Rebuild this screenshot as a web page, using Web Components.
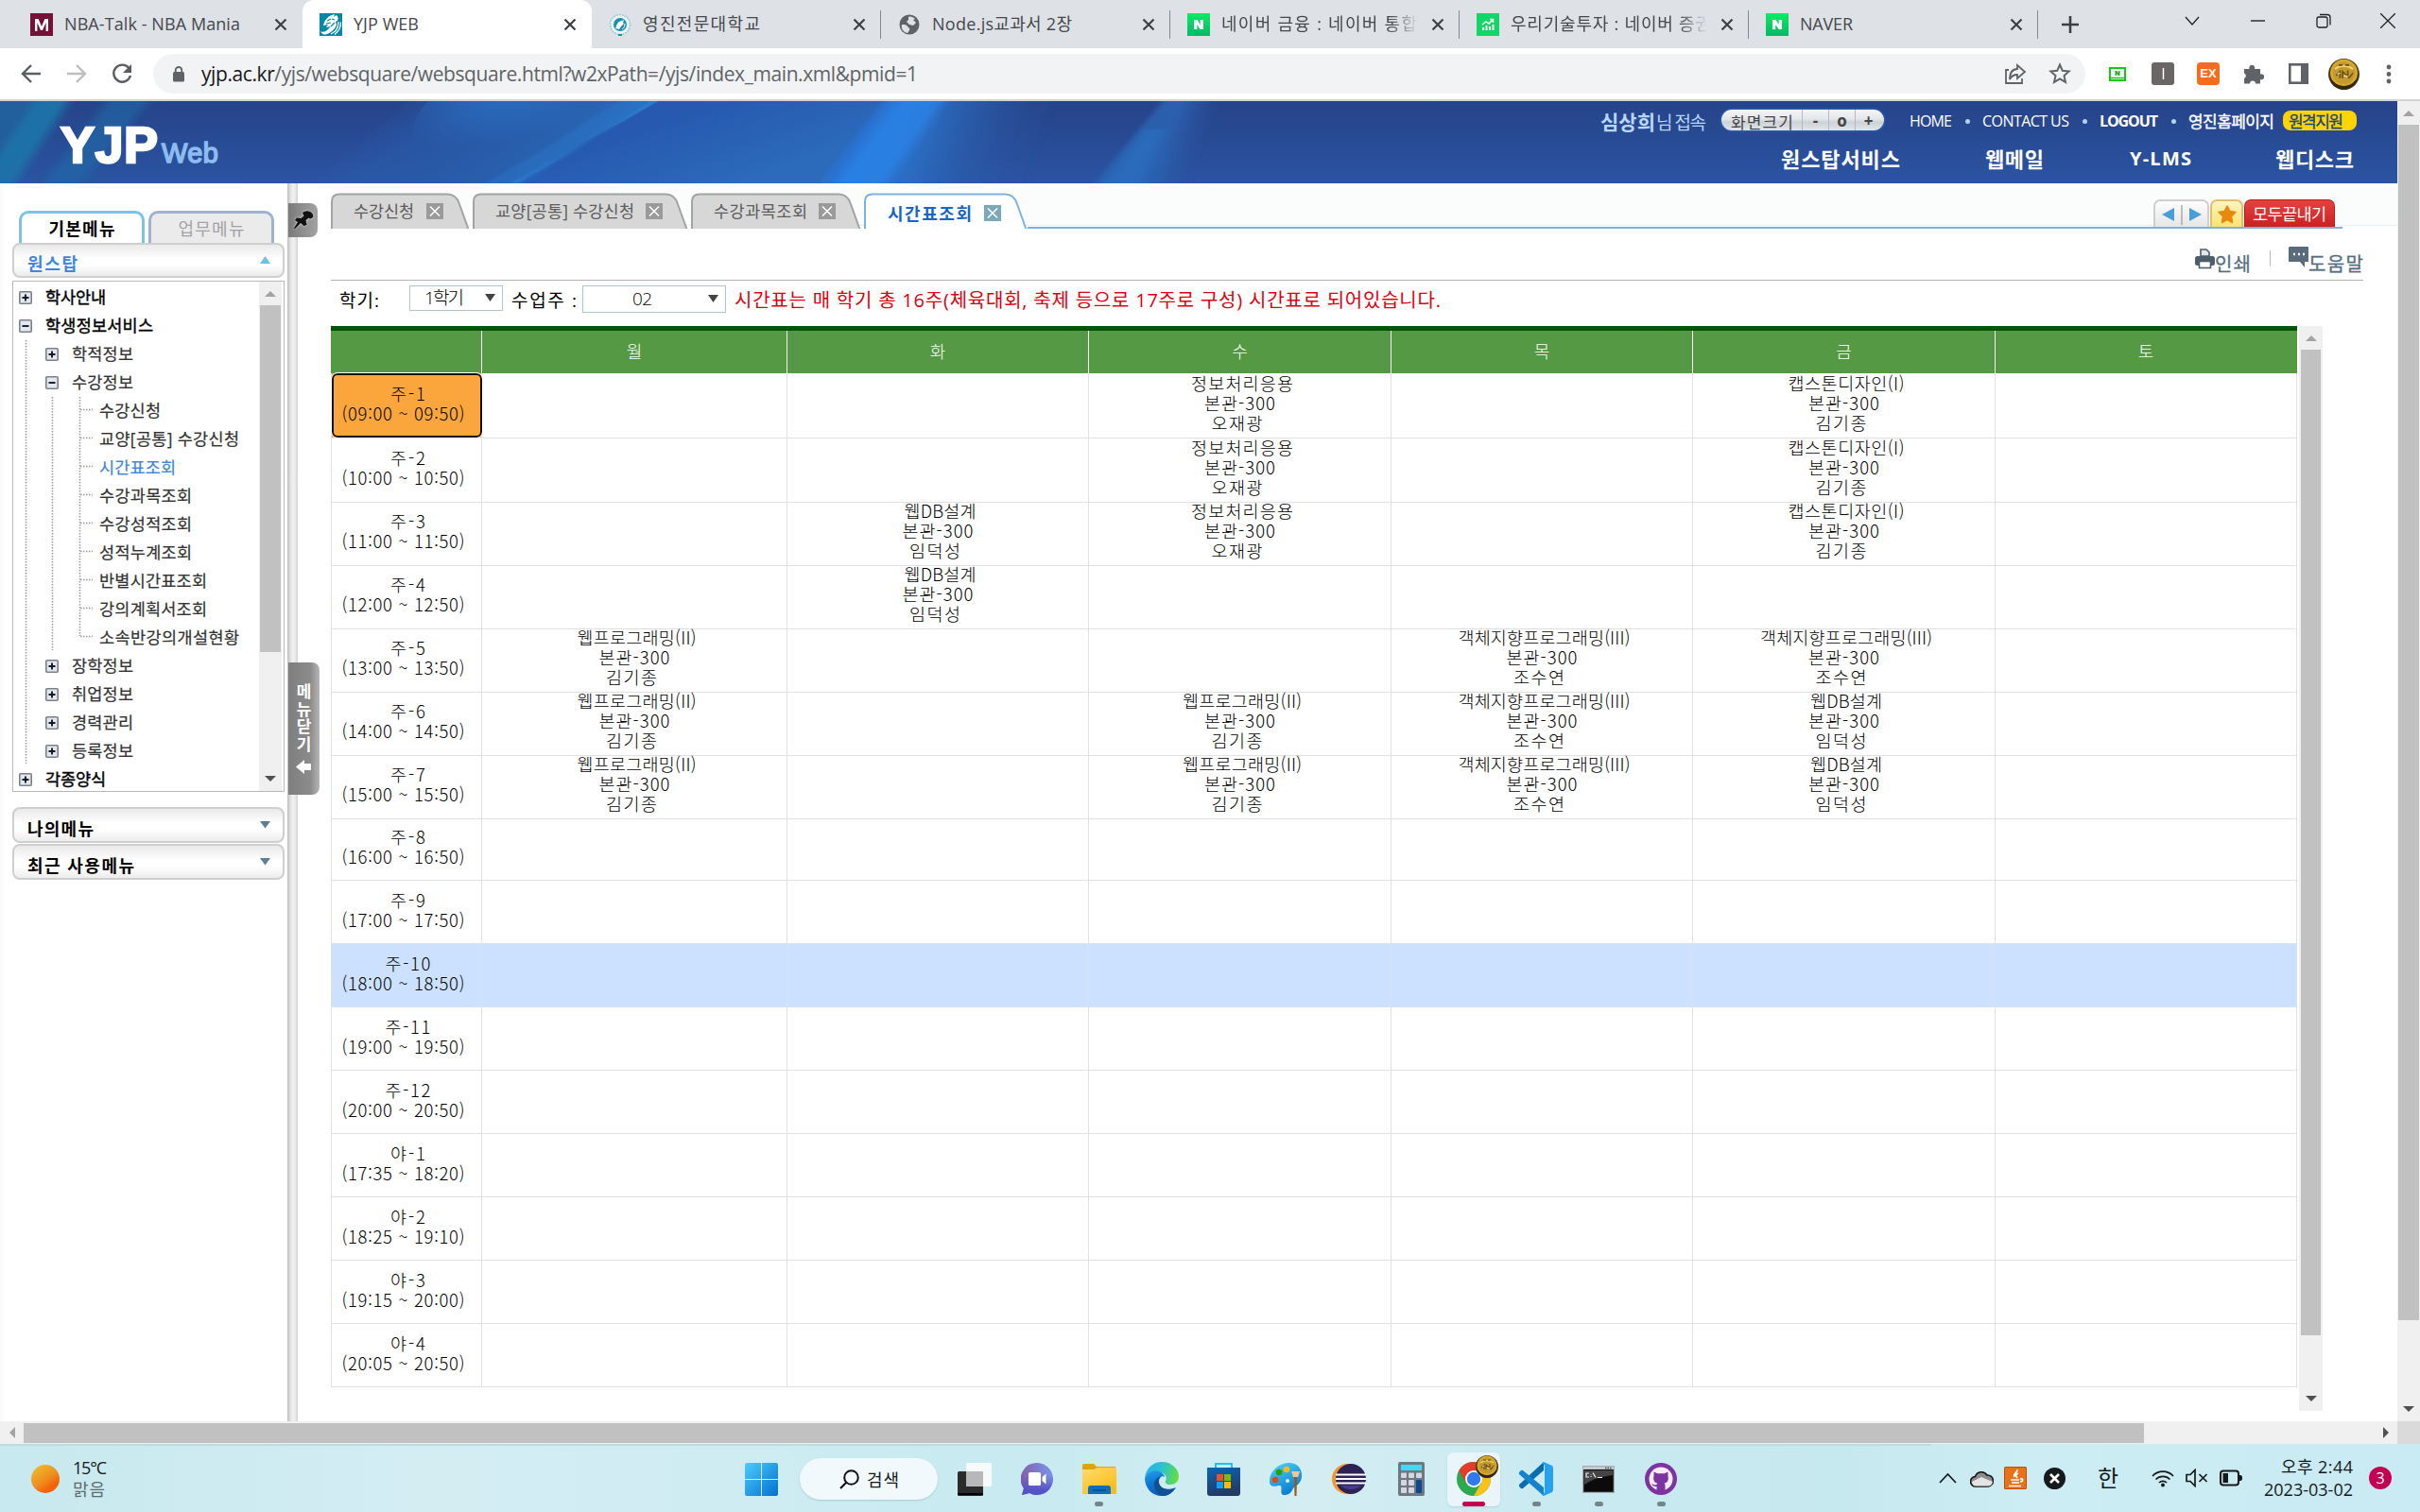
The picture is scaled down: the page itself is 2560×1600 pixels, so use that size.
<!DOCTYPE html>
<html lang="ko">
<head>
<meta charset="utf-8">
<title>YJP WEB</title>
<style>
body{margin:0;width:2560px;height:1600px;overflow:hidden;background:#fff;font-family:"Open Sans","Noto Sans CJK KR",sans-serif;font-size:18px;color:#000}
</style>
</head>
<body>
<app-desktop></app-desktop>
<script>
const BASE = `*{box-sizing:border-box}:host{display:block}.r{display:flex;align-items:center}svg{display:block;flex:none}fit-text{flex:none}`;
function define(name, render) {
  customElements.define(name, class extends HTMLElement {
    connectedCallback() {
      if (this.shadowRoot) return;
      const root = this.attachShadow({ mode: 'open' });
      root.innerHTML = render(this);
    }
  });
}
const A = (el, n, d) => el.hasAttribute(n) ? el.getAttribute(n) : d;

/* Text run tracked to an exact width */
customElements.define('fit-text', class extends HTMLElement {
  connectedCallback() {
    if (this.shadowRoot) return;
    const root = this.attachShadow({ mode: 'open' });
    root.innerHTML = '<style>:host{display:inline-block;white-space:pre}</style><slot></slot>';
    const w = parseFloat(this.getAttribute('w'));
    if (!w) return;
    const n = [...this.textContent].length;
    const nat = this.getBoundingClientRect().width;
    if (n > 1) this.style.letterSpacing = ((w - nat) / (n - 1)) + 'px';
    this.style.width = w + 'px';
  }
});

/* Scroll bar, vertical or horizontal */
define('scroll-bar', el => {
  const h = A(el, 'dir', 'v') === 'h', size = A(el, 'size', '24'), inset = A(el, 'inset', '1');
  const tri = (p, c) => `<svg width="12" height="12" viewBox="0 0 12 12"><path d="${p}" fill="${c}"/></svg>`;
  return `<style>${BASE}
  :host{display:flex;flex:none;flex-direction:${h ? 'row' : 'column'};background:#f0f0f0;${h ? 'height' : 'width'}:${size}px}
  .a{flex:none;width:${h ? '25px' : '100%'};height:${h ? '100%' : '25px'};display:flex;align-items:center;justify-content:center}
  .t{flex:none;background:#c1c1c1;${h ? `width:${A(el, 'len')}px;margin:2px 0 1px` : `height:${A(el, 'len')}px;margin:0 ${inset}px`}}
  .s{flex:1}</style>
  <div class="a">${tri(h ? 'M9 0v12L3 6z' : 'M0 9h12L6 3z', '#a3a3a3')}</div><div class="t"></div><div class="s"></div>
  <div class="a">${tri(h ? 'M3 0v12l6-6z' : 'M0 2h12L6 8z', '#505050')}</div>`;
});

/* ---------- Browser ---------- */
const FAV = {
  m: `<rect width="24" height="24" fill="#741134"/><path d="M5 19V6h3.600L12 14l3.400-8H19v13h-2.400V10L13 18h-2L7.400 10v9z" fill="#fff"/>`,
  yjp: `<rect width="24" height="24" fill="#0387a6"/><path d="M1 19c3 2 6 0 8-2l3-3-5 1 2-3-5 1C5 8 8 4 13 2l3-1-1 3 3-2c2 2 2 4 1 6l-2 1 1 3c-1 4-5 8-10 10-3 1-6 0-7-3z" fill="#fff"/><path d="M12 22c5-2 8-7 8-13M16 22.500c4-3 6.500-7 6.500-13" stroke="#fff" stroke-width="1.300" fill="none"/><path d="M8 8l4-2M7 11l5-1M13 6l3 1M12 14l4-4" stroke="#0387a6" stroke-width="1.200"/>`,
  yju: `<ellipse cx="12" cy="12" rx="10.500" ry="10.500" fill="#e8f4f8" stroke="#9cc7d6" stroke-width="1.500" stroke-dasharray="2 1"/><circle cx="12" cy="12" r="7" fill="#1b8fae"/><path d="M7 16c1-1 1-5 4-7l5-2-1 3 1 1-3 3-2 3z" fill="#fff"/><path d="M14 17c2-1 3-3 3-6" stroke="#fff" fill="none"/><path d="M10 22h4v2h-4z" fill="#1b8fae"/>`,
  globe: `<circle cx="12" cy="12" r="10.500" fill="#5f6368"/><path d="M4 12c3 0 5 0 6 2s3 1 2 4l-2 3c-4-1-7-4-6-9zM11 4c2-1 5 0 7 2l-2 1 3 3-3 3-4-1-3-3 2-2z" fill="#dee1e6"/>`,
  n: `<defs><linearGradient id="ng" x2="0" y2="1"><stop stop-color="#03ee66"/><stop offset="1" stop-color="#07b766"/></linearGradient></defs><rect width="24" height="24" fill="url(#ng)"/><path d="M7 17V7h3.400l3.300 4.900V7H17v10h-3.400l-3.300-4.900V17z" fill="#fff"/>`,
  chart: `<rect width="24" height="24" fill="#12d667"/><path d="M6 18v-3h2v3zm3.500 0v-5h2v5zm3.500 0v-4h2v4zm3.500 0V12h2v6z" fill="#fff"/><path d="M6 12l4-3 3 2 4-4M14 6.500h3.500V10" stroke="#fff" stroke-width="1.500" fill="none"/>`
};
define('browser-tab', el => `<style>${BASE}
  :host{width:306px;flex:none;height:51px}
  .tab{height:51px;padding-left:18px}
  :host([active]) .tab{background:#fff;border-radius:12px 12px 0 0}
  .t{flex:none;width:200px;margin-left:12px;height:26px;line-height:26px;color:#45484c;white-space:nowrap;margin-top:-1px}
  :host([fade]) .t{width:214px;-webkit-mask-image:linear-gradient(90deg,#000 178px,transparent 208px)}
  .x{margin-left:22px}:host([fade]) .x{margin-left:8px}
  .d{flex:none;width:1px;height:30px;background:#85898e;margin-left:15px}
  </style><div class="tab r"><svg width="24" height="24" viewBox="0 0 24 24">${FAV[A(el, 'icon')]}</svg>
  <div class="t"><fit-text w="${A(el, 'w')}">${A(el, 'label')}</fit-text></div>
  <svg class="x" width="14" height="14" viewBox="0 0 14 14"><path d="M1.500 1.500l11 11M12.500 1.500l-11 11" stroke="#3c4043" stroke-width="2.200"/></svg>
  ${el.hasAttribute('divider') ? '<div class="d"></div>' : ''}</div>`);

define('browser-tabs', () => `<style>${BASE}
  :host{height:51px;background:#dee1e6}.r{height:51px;padding-left:14px}
  .c{height:45px;display:flex;align-items:center;align-self:flex-start}
  </style><div class="r">
  <browser-tab icon="m" w="186" label="NBA-Talk - NBA Mania"></browser-tab>
  <browser-tab active icon="yjp" w="69" label="YJP WEB"></browser-tab>
  <browser-tab divider icon="yju" w="124" label="영진전문대학교"></browser-tab>
  <browser-tab divider icon="globe" w="148" label="Node.js교과서 2장"></browser-tab>
  <browser-tab divider fade icon="n" w="207" label="네이버 금융 : 네이버 통합"></browser-tab>
  <browser-tab divider fade icon="chart" w="212" label="우리기술투자 : 네이버 증권"></browser-tab>
  <browser-tab divider icon="n" w="56" label="NAVER"></browser-tab>
  <svg style="margin-left:25px" width="18" height="18" viewBox="0 0 18 18"><path d="M9 0v18M0 9h18" stroke="#3c4043" stroke-width="2.600"/></svg>
  <div class="c"><svg style="margin-left:112px" width="16" height="16" viewBox="0 0 16 16"><path d="M1 3l7 8 7-8" fill="none" stroke="#222" stroke-width="1.300"/></svg>
  <svg style="margin-left:54px" width="16" height="16" viewBox="0 0 16 16"><path d="M0 7h15" stroke="#222" stroke-width="1.400"/></svg>
  <svg style="margin-left:52px" width="18" height="18" viewBox="0 0 18 18"><rect x="2" y="4" width="11" height="11" rx="2" fill="none" stroke="#222" stroke-width="1.300"/><path d="M5 1.500h8q3 0 3 3v8" fill="none" stroke="#222" stroke-width="1.300"/></svg>
  <svg style="margin-left:51px;margin-top:-2px" width="16" height="16" viewBox="0 0 16 16"><path d="M0 0l16 16M16 0L0 16" stroke="#222" stroke-width="1.300"/></svg></div></div>`);

const COIN = `<circle cx="12" cy="12" r="12" fill="#4a3a18"/><circle cx="12" cy="11" r="10.500" fill="#d6a92e"/><circle cx="12" cy="11" r="8.500" fill="#c39a2b"/><path d="M5 8c4-3 10-3 14 0" stroke="#f0d878" stroke-width="1.200" fill="none"/><path d="M6 13l3-3v5M11 15v-5l4 4v-5M16 15l3-4M8 5h3M13 5h3" stroke="#6b5118" stroke-width="1.200" fill="none"/><path d="M7 12l2-1M12 13l3 1" stroke="#f3e6ae" fill="none"/><path d="M1 14c2 7 7 10 11 10s9-3 11-10c-3 5-7 7-11 7S4 19 1 14z" fill="#33270f"/>`;
define('browser-toolbar', () => `<style>${BASE}
  :host{height:56px;background:#fff;border-bottom:2px solid #d3d3d4}
  .bar{height:54px}.omni{width:2044px;height:42px;border-radius:21px;background:#f1f3f4;margin-left:22px;padding-left:21px}
  .url{font-size:21px;color:#5f6368;margin-left:18px;line-height:28px}b{font-weight:400;color:#17181a}
  </style><div class="bar r">
  <svg style="margin-left:22px" width="22" height="22" viewBox="0 0 22 22"><path d="M21 11H3M11 2l-9 9 9 9" fill="none" stroke="#5a5d61" stroke-width="2.400"/></svg>
  <svg style="margin-left:26px" width="22" height="22" viewBox="0 0 22 22"><path d="M1 11h18M11 2l9 9-9 9" fill="none" stroke="#bcbec0" stroke-width="2.400"/></svg>
  <svg style="margin-left:26px" width="22" height="22" viewBox="0 0 22 22"><path d="M18.500 5.200A9 9 0 1 0 20 13" fill="none" stroke="#5a5d61" stroke-width="2.400"/><path d="M21 1v9h-9z" fill="#5a5d61"/></svg>
  <div class="omni r"><svg width="12" height="17" viewBox="0 0 12 17"><rect y="6" width="12" height="10.500" rx="1.500" fill="#5f6368"/><path d="M2.700 7V4.300a3.300 3.300 0 0 1 6.600 0V7" fill="none" stroke="#5f6368" stroke-width="1.800"/></svg>
  <fit-text class="url" w="758"><b>yjp.ac.kr</b>/yjs/websquare/websquare.html?w2xPath=/yjs/index_main.xml&amp;pmid=1</fit-text>
  <svg style="margin-left:1149px" width="24" height="24" viewBox="0 0 24 24"><path d="M5 8H2v14h17v-5" fill="none" stroke="#5f6368" stroke-width="1.800"/><path d="M14 3l8 7-8 7v-4c-4 0-6 1-8 5 0-7 3-11 8-11z" fill="none" stroke="#5f6368" stroke-width="1.800"/></svg>
  <svg style="margin-left:23px" width="24" height="24" viewBox="0 0 24 24"><path d="M12 2.500l2.800 6.300 6.900.7-5.200 4.600 1.500 6.800-6-3.500-6 3.500 1.500-6.800L2.300 9.500l6.900-.7z" fill="none" stroke="#5f6368" stroke-width="2"/></svg></div>
  <svg style="margin-left:25px" width="18" height="15" viewBox="0 0 18 15"><rect x="1" y="1" width="16" height="13" fill="#fff" stroke="#12c912" stroke-width="2"/><path d="M1 11.500h16" stroke="#12c912" stroke-width="1.500"/><path d="M6.500 9V4h1.800l1.600 2.500V4h1.600v5H9.700L8.100 6.500V9z" fill="#12b312"/></svg>
  <svg style="margin-left:27px" width="24" height="24" viewBox="0 0 24 24"><rect width="24" height="24" rx="3" fill="#6a6666"/><path d="M12.500 6v12" stroke="#fff" stroke-width="1.500"/></svg>
  <div style="margin-left:24px;width:24px;height:24px;border-radius:4px;background:#f56c1e;color:#fff;font:bold 13px/24px 'Liberation Sans';text-align:center">EX</div>
  <svg style="margin-left:25px" width="22" height="22" viewBox="0 0 22 22"><path d="M1 6h5.500a3 3 0 1 1 5.500 0H18v5.500a3 3 0 1 1 0 5.500v4.500h-5a3 3 0 0 0-6 0H1v-5.500a3 3 0 0 0 0-5.500z" fill="#5f6368"/></svg>
  <svg style="margin-left:26px" width="21" height="22" viewBox="0 0 21 22"><rect x="1.300" y="1.300" width="18.400" height="19.400" fill="#fff" stroke="#5f6368" stroke-width="2.600"/><path d="M13 1h7v20h-7z" fill="#5f6368"/></svg>
  <svg style="margin-left:21px" width="33" height="33" viewBox="0 0 24 24">${COIN}</svg>
  <svg style="margin-left:28px" width="6" height="21" viewBox="0 0 6 21"><g fill="#5f6368"><circle cx="3" cy="3" r="2.400"/><circle cx="3" cy="10.500" r="2.400"/><circle cx="3" cy="18" r="2.400"/></g></svg></div>`);

/* ---------- Site header ---------- */
define('site-header', () => `<style>${BASE}
  :host{display:grid;height:87px;overflow:hidden}
  .bg,.fg{grid-area:1/1}.fg{display:flex;justify-content:space-between;color:#fff}
  .logo{display:flex;align-items:baseline;font-family:"Liberation Sans";padding-left:64px;line-height:62px;height:87px;padding-top:15px}
  .logo .a{font-size:54px;font-weight:700;-webkit-text-stroke:2.500px #fff}.logo .b{font-size:29px;color:#8cbcf0;margin-left:4px;-webkit-text-stroke:1.500px #8cbcf0}
  .right{width:843px}.top{height:43px;line-height:22px;font-size:16px}.top>*{flex:none}
  .dot{width:5px;height:5px;border-radius:3px;background:#b4d3f2}
  .pill{width:172px;height:22px;border-radius:11px;margin-left:16px;background:linear-gradient(#f3f5f7,#e4e7ea 45%,#cdd2d8 60%,#e2e5e8);color:#444;display:flex;box-shadow:0 0 2px 1px #2c66b5;font-size:17px}
  .pill div{border-left:1px solid #b5b9bf;width:28px;text-align:center;font-weight:700;line-height:24px;height:22px}
  .y{width:78px;height:21px;border-radius:8px;background:#ffd400;color:#14438c;padding-left:6px;margin-left:9px;line-height:23px}
  .nav{font-weight:700;font-size:22px;height:36px;line-height:34px}
  </style>
  <svg class="bg" width="2536" height="87" viewBox="0 0 2536 87" preserveAspectRatio="none">
  <defs><linearGradient id="b" x2="0" y2="1"><stop stop-color="#264389"/><stop offset="1" stop-color="#2b54a2"/></linearGradient>
  <linearGradient id="m" gradientUnits="userSpaceOnUse" x1="420" y1="0" x2="540" y2="132"><stop stop-color="#2a60b0" stop-opacity="0"/><stop offset=".35" stop-color="#2859a8" stop-opacity=".8"/><stop offset=".8" stop-color="#2862b0"/><stop offset="1" stop-color="#2a70c0"/></linearGradient>
  <linearGradient id="n" gradientUnits="userSpaceOnUse" x1="750" y1="0" x2="780" y2="87"><stop stop-color="#2659af"/><stop offset="1" stop-color="#2c6abb"/></linearGradient>
  <linearGradient id="o" gradientUnits="userSpaceOnUse" x1="930" y1="0" x2="1100" y2="59"><stop stop-color="#2a72d0"/><stop offset=".3" stop-color="#2b6dc2"/><stop offset="1" stop-color="#29509b" stop-opacity="0"/></linearGradient>
  <linearGradient id="p" gradientUnits="userSpaceOnUse" x1="1232" y1="0" x2="1286" y2="18"><stop stop-color="#2a5fac"/><stop offset=".3" stop-color="#2a60ae"/><stop offset="1" stop-color="#29509b" stop-opacity="0"/></linearGradient>
  <radialGradient id="k" cx=".5" cy=".2" r=".6"><stop stop-color="#2a7bd0" stop-opacity=".75"/><stop offset="1" stop-color="#2a7bd0" stop-opacity="0"/></radialGradient>
  <filter id="f" x="-20%" y="-20%" width="140%" height="140%"><feGaussianBlur stdDeviation="6 1"/></filter><filter id="g" x="-10%" width="120%"><feGaussianBlur stdDeviation="1.200"/></filter><filter id="h" x="-20%" width="140%"><feGaussianBlur stdDeviation="3 0"/></filter></defs>
  <rect width="2536" height="87" fill="url(#b)"/>
  <g filter="url(#f)"><path d="M40-5h36L12 92h-40z" fill="#1f72a8"/><path d="M-10-5h50L-10 60z" fill="#235e9d"/><path d="M118-5h44L82 92H42z" fill="#226ba8" opacity=".6"/></g>
  <path d="M430 0h267L540 87H330z" fill="url(#m)"/>
  <ellipse cx="545" cy="10" rx="110" ry="52" fill="url(#k)" transform="rotate(-14 545 10)"/>
  <path d="M697 0h260L880 87H540z" fill="url(#n)"/>
  <path d="M660-3h36L552 88h-40l60-35z" fill="#2b76c6" opacity=".45" filter="url(#h)"/>
  <path d="M691-2h8L545 88h-8l94-50z" fill="#2f85d4" opacity=".6" filter="url(#g)"/>
  <path d="M935 0h185l-30 87H867z" fill="url(#o)" filter="url(#h)"/><path d="M950-4h50L935 92h-55z" fill="#2c84ea" opacity=".75" filter="url(#f)"/>
  <path d="M1232-2h60l-30 91H1156z" fill="url(#p)" filter="url(#h)"/><path d="M1212 30l20 0-24 60h-44z" fill="#2c74c8" opacity=".55" filter="url(#f)"/></svg>
  <div class="fg"><div class="logo"><fit-text class="a" w="103">YJP</fit-text><fit-text class="b" w="60">Web</fit-text></div>
  <div class="right"><div class="top r">
  <fit-text w="58" style="font-size:21px;font-weight:700;color:#b6d7fb">심상희</fit-text><fit-text w="53" style="font-size:19px;color:#b6d7fb;margin-left:1px;margin-top:2px">님 접속</fit-text>
  <div class="pill" style="margin-top:-4px"><fit-text w="66" style="margin:3px 9px 0 10px">화면크기</fit-text><div>-</div><div>o</div><div>+</div></div>
  <fit-text w="45" style="margin-left:27px;margin-top:-2px">HOME</fit-text><i class="dot" style="margin-left:14px"></i>
  <fit-text w="92" style="margin-left:13px;margin-top:-2px">CONTACT US</fit-text><i class="dot" style="margin-left:14px"></i>
  <fit-text w="62" style="margin-left:13px;margin-top:-2px;font-weight:700">LOGOUT</fit-text><i class="dot" style="margin-left:14px"></i>
  <fit-text w="91" style="margin-left:13px;margin-top:0;font-size:17px;-webkit-text-stroke:.4px #fff">영진홈페이지</fit-text><div class="y" style="margin-top:-3px"><fit-text w="58" style="-webkit-text-stroke:.3px #14438c;font-size:17px">원격지원</fit-text></div></div>
  <div class="nav r"><fit-text w="126" style="margin-left:191px">원스탑서비스</fit-text><fit-text w="62" style="margin-left:90px">웹메일</fit-text><fit-text w="65" style="margin-left:91px;font-size:20px">Y-LMS</fit-text><fit-text w="83" style="margin-left:89px">웹디스크</fit-text></div></div></div>`);

/* ---------- Side menu ---------- */
define('tree-row', el => {
  const lv = +A(el, 'lv'), st = A(el, 'st', ''), last = el.hasAttribute('last');
  const v = (x, a, b) => `<path d="M${x} ${a}V${b}"/>`;
  let lines = '';
  if (lv > 0) lines += v(13.5, 0, el.hasAttribute('end') ? 28 : 30);
  if (lv > 1) lines += v(41.5, 0, last ? 28 : 30) + v(70.5, 0, last ? 13 : 30) + '<path d="M71 13.500H84"/>';
  const ix = lv === 0 ? 6 : 34;
  const box = st ? `<g transform="translate(${ix} 8)"><rect x=".8" y=".8" width="12.400" height="12.400" rx="1" fill="#e2e8f1" stroke="#7d8087" stroke-width="1.600"/><path d="M3.500 7h7${st === '+' ? 'M7 3.500v7' : ''}" stroke="#15181d" stroke-width="1.900"/></g>` : '';
  return `<style>${BASE}:host{height:30px}.r{height:30px}fit-text{font-size:17.500px;color:${lv ? '#333' : '#000'};line-height:28px;height:30px;-webkit-text-stroke:${lv ? '.2px' : '.4px'} currentColor}:host([on]) fit-text{color:#3c86dc}</style>
  <div class="r"><svg width="${[34, 62, 91][lv]}" height="30"><g stroke="#999" stroke-width="1.500" stroke-dasharray="1.500 1.500" fill="none">${lines}</g>${box}</svg><fit-text w="${A(el, 'w')}">${A(el, 'label')}</fit-text></div>`;
});
define('menu-head', el => `<style>${BASE}
  :host{height:${A(el, 'h', '38')}px}.r{height:100%;border:2px solid #cfcfcf;border-radius:8px;background:linear-gradient(#e9e9ea,#fff 45%,#fff 65%,#ececec);padding:7px 13px 0 14px;justify-content:space-between;font-weight:700;font-size:18px;line-height:26px}
  fit-text{color:${A(el, 'color', '#000')}}svg{margin-top:-8px}
  </style><div class="r"><fit-text w="${A(el, 'w')}">${A(el, 'label')}</fit-text><svg width="11" height="8" viewBox="0 0 11 8">${el.hasAttribute('open') ? '<path d="M0 8h11L5.500 0z" fill="#6cc0e6"/>' : '<path d="M0 0h11L5.500 7.500z" fill="#5c7f94"/>'}</svg></div>`);
const TREE = [[0, '+', 64, '학사안내'], [0, '-', 114, '학생정보서비스'], [1, '+', 65, '학적정보'], [1, '-', 65, '수강정보'],
  [2, '', 65, '수강신청'], [2, '', 148, '교양[공통] 수강신청'], [2, '', 81, '시간표조회', 'on'], [2, '', 98, '수강과목조회'], [2, '', 98, '수강성적조회'], [2, '', 98, '성적누계조회'], [2, '', 114, '반별시간표조회'], [2, '', 114, '강의계획서조회'], [2, '', 148, '소속반강의개설현황', 'last'],
  [1, '+', 65, '장학정보'], [1, '+', 65, '취업정보'], [1, '+', 65, '경력관리'], [1, '+', 65, '등록정보', 'end'], [0, '+', 64, '각종양식']];
define('side-menu', () => `<style>${BASE}
  :host{width:304px;height:1310px;flex:none;padding:29px 3px 0 13px;background:linear-gradient(90deg,#fafcfc 3px,#fff 3px)}
  .tabs{display:flex;gap:4px;padding-left:7px;height:34px}
  .tab{width:133px;height:34px;border:3px solid #7cc3e6;border-bottom:0;border-radius:10px 10px 0 0;display:flex;justify-content:center;align-items:center;font-size:18px;font-weight:700;line-height:24px}
  .tab.off{border-color:#9fb2d2;background:#ebebeb;color:#a2a2a8;font-weight:400}
  .tree{display:flex;height:541px;border:1px solid #b8b8b8;margin-top:3px;padding-right:2px}
  .list{flex:1;padding-top:2px;overflow:hidden}
  </style><div class="tabs"><div class="tab"><fit-text w="70">기본메뉴</fit-text></div><div class="tab off"><fit-text w="70">업무메뉴</fit-text></div></div>
  <menu-head open h="37" w="53" color="#3f87dc" label="원스탑"></menu-head>
  <div class="tree"><div class="list">${TREE.map(t => `<tree-row lv="${t[0]}" st="${t[1]}" w="${t[2]}" label="${t[3]}" ${t[4] || ''}></tree-row>`).join('')}</div><scroll-bar size="24" len="367" inset="1"></scroll-bar></div>
  <div style="height:16px"></div><menu-head w="70" label="나의메뉴"></menu-head><div style="height:1px"></div><menu-head w="113" label="최근 사용메뉴"></menu-head>`);

define('menu-splitter', () => `<style>${BASE}
  :host{width:11px;height:1310px;flex:none;background:linear-gradient(90deg,#bdbdbd,#d5d5d5 2px,#efefef 5px,#ececec 8px,#d2d2d2);padding:21px 0 0 1px}
  .pin{width:31px;height:36px;border-radius:0 8px 8px 0;background:linear-gradient(90deg,#7a7a7a,#a2a2a2);display:flex;align-items:center;justify-content:center}
  .close{width:33px;height:140px;margin-top:450px;border-radius:0 8px 8px 0;background:linear-gradient(90deg,#7f7f7f,#8b8b8b 70%,#b5b5b5);color:#fff;display:flex;flex-direction:column;align-items:center;padding-top:22px;font-weight:700;font-size:17px}
  .close span{line-height:18.700px;height:18.700px}.close svg{margin-top:6px}
  </style><div class="pin"><svg width="22" height="22" viewBox="0 0 22 22" style="filter:drop-shadow(0 0 1.500px #ddd)"><path d="M10 3q4-3 8-1 4 2 3 6l-3 1.500-1.500-1-3 2.500 1 5-3 1-3.500-3L2 20l-1-.5L5 13l-3-2 2-2.500 4.500.5 3-2.500z" fill="#111"/></svg></div>
  <div class="close"><span>메</span><span>뉴</span><span>닫</span><span>기</span><svg width="17" height="15" viewBox="0 0 17 15"><path d="M0 7.500L9 0v4h7v7H9v4z" fill="#fff"/></svg></div>`);

/* ---------- Work area ---------- */
define('work-tab', el => {
  const w = +A(el, 'width'), on = el.hasAttribute('on');
  return `<style>${BASE}:host{display:grid;width:${w}px;height:38px;flex:none}svg.s,.r{grid-area:1/1}
  .r{height:38px;padding-left:${A(el, 'pad')}px;gap:${A(el, 'gap', '12')}px;font-size:${on ? 18 : 17.5}px;line-height:24px;color:${on ? '#1766c4' : '#5c5c5c'};font-weight:${on ? 700 : 400};padding-top:${on ? 5 : 0}px}</style>
  <svg class="s" width="${w}" height="38"><path d="M1 40V9Q1 1.500 9 1.500H${w - 24}Q${w - 14} 1.500 ${w - 11} 12L${w - 1} 40z" fill="${on ? '#fff' : '#d7d7d7'}" stroke="${on ? '#7eb2e2' : '#a3a3a3'}" stroke-width="2"/></svg>
  <div class="r"><fit-text w="${A(el, 'w')}">${A(el, 'label')}</fit-text><svg width="18" height="17" viewBox="0 0 18 17"><rect width="18" height="17" fill="${on ? '#7ba9bc' : '#9a9a9a'}"/><path d="M4 3.500l10 10M14 3.500l-10 10" stroke="#fff" stroke-width="1.500"/></svg></div>`;
});
define('work-tabs', () => `<style>${BASE}
  :host{height:48px;background:linear-gradient(#fff 3px,#fbfdfd 3px,#fbfdfd 44px,#e3eef5 44px,#e3eef5 45px,#fff 45px)}
  .row{display:flex;height:48px;align-items:flex-end}
  .tabs{display:flex;gap:3px;height:38px}.line{flex:1;display:flex;justify-content:flex-end;height:31px;border-bottom:2px solid #7fb0de;padding-right:8px;margin-right:58px}
  .b{height:29px;border-radius:7px 7px 0 0;display:flex;align-items:center;justify-content:center;line-height:24px}
  </style><div class="row"><div class="tabs">
  <work-tab width="147" pad="24" w="64" gap="13" label="수강신청"></work-tab><work-tab width="228" pad="24" w="147" label="교양[공통] 수강신청"></work-tab>
  <work-tab width="180" pad="24" w="99" label="수강과목조회"></work-tab><work-tab on width="173" pad="25" w="89" gap="13" label="시간표조회"></work-tab></div>
  <div class="line"><div class="b" style="width:59px;background:linear-gradient(#fdfdfd,#e6e6e6);border:2px solid #cfcfcf;border-bottom:0"><svg width="46" height="24" viewBox="0 0 46 24"><path d="M15 5v14L2 12zM31 5v14l13-7z" fill="#4a9ed8"/><path d="M23 2v21" stroke="#999" stroke-width="1.200"/></svg></div>
  <div class="b" style="width:35px;margin-left:1px;background:linear-gradient(#fdf4c0,#fbe36f);border:2px solid #e0bd72;border-bottom:0"><svg width="24" height="24" viewBox="0 0 24 24"><path d="M12 3l3 5.500 6 1-4.500 4.500 1 6.500-5.500-3-5.500 3 1-6.500L3 9.500l6-1z" fill="#e8890f" stroke="#e8890f" stroke-width="1.500" stroke-linejoin="round"/></svg></div>
  <div class="b" style="width:96px;margin-left:1px;background:linear-gradient(#e5413f,#cf1f22);border:1px solid #b51d20;border-bottom:0;color:#fff;font-size:17.500px"><fit-text w="78">모두끝내기</fit-text></div></div></div>`);

define('combo-box', el => `<style>${BASE}:host{flex:none;font-weight:300}.r{width:${A(el, 'width')}px;height:${A(el, 'height')}px;border:1px solid #b0c4d8;padding-left:${A(el, 'pad')}px;padding-right:7px;justify-content:space-between;background:#fff;font-size:19px;line-height:24px}svg{margin-top:-2px}fit-text{margin-top:-2px}</style>
  <div class="r"><fit-text w="${A(el, 'w')}">${A(el, 'label')}</fit-text><svg width="11" height="8"><path d="M0 0h11L5.500 8z" fill="#444"/></svg></div>`);

define('lesson-cell', el => {
  const L = JSON.parse(A(el, 'lines', '[]')), head = el.hasAttribute('head');
  return `<style>${BASE}:host{display:flex;flex-direction:column;align-items:center;justify-content:center;flex:none;border-right:1px solid #e1e1e1;border-bottom:1px solid #e1e1e1;position:relative;line-height:21px;font-size:18.500px;padding-bottom:5px}
  :host([hot]){background:#faa63d}
  .ring{position:absolute;left:0;top:0;width:159px;height:68px;border:2px solid #101010;border-radius:6px;outline:1px solid #fff}</style>
  ${L.map((l, i) => `<fit-text w="${l[1]}" style="${head ? (i ? 'margin-right:7px' : 'margin-left:3px') : ['margin-left:5px', '', 'margin-right:6px'][i]}">${l[0]}</fit-text>`).join('')}${el.hasAttribute('hot') ? '<div class="ring"></div>' : ''}`;
});
const LESSON = {
  i: [['정보처리응용', 108], ['본관-300', 75], ['오재광', 54]],
  c: [['캡스톤디자인(I)', 123], ['본관-300', 75], ['김기종', 54]],
  d: [['웹DB설계', 76], ['본관-300', 75], ['임덕성', 54]],
  w: [['웹프로그래밍(II)', 126], ['본관-300', 75], ['김기종', 54]],
  o: [['객체지향프로그래밍(III)', 182], ['본관-300', 75], ['조수연', 54]]
};
const ROWS = [['주-1', '09:00 ~ 09:50', '..i.c.'], ['주-2', '10:00 ~ 10:50', '..i.c.'], ['주-3', '11:00 ~ 11:50', '.di.c.'], ['주-4', '12:00 ~ 12:50', '.d....'], ['주-5', '13:00 ~ 13:50', 'w..oo.'], ['주-6', '14:00 ~ 14:50', 'w.wod.'], ['주-7', '15:00 ~ 15:50', 'w.wod.'], ['주-8', '16:00 ~ 16:50', '......'], ['주-9', '17:00 ~ 17:50', '......'], ['주-10', '18:00 ~ 18:50', '......'], ['주-11', '19:00 ~ 19:50', '......'], ['주-12', '20:00 ~ 20:50', '......'], ['야-1', '17:35 ~ 18:20', '......'], ['야-2', '18:25 ~ 19:10', '......'], ['야-3', '19:15 ~ 20:00', '......'], ['야-4', '20:05 ~ 20:50', '......']];
define('time-table', () => `<style>${BASE}
  :host{width:2080px;flex:none;font-family:"Noto Sans CJK KR Light","Noto Sans CJK KR",sans-serif;font-weight:300}
  .g{display:grid;grid-template-columns:159px 323px 319px 320px 319px 320px 319px}
  .h{height:50px;border-top:5px solid #005500;background:#559944;padding-left:1px}.h div{color:#fff;border-right:1px solid #fff;display:flex;align-items:center;justify-content:center;font-size:18px;padding-bottom:4px}.h div:last-child{border-color:#559944}
  .row{height:67px;border-left:1px solid #e1e1e1}.row.f{height:68px}.row.sel{background:#cce0ff}.row.sel lesson-cell{border-color:#d5e2f4}
  </style><div class="g h"><div></div>${[...'월화수목금토'].map(d => `<div>${d}</div>`).join('')}</div>
  ${ROWS.map((r, i) => `<div class="g row ${i === 0 ? 'f' : ''} ${i === 9 ? 'sel' : ''}"><lesson-cell head ${i ? '' : 'hot'} lines='${JSON.stringify([[r[0], r[0].length > 3 ? 48 : 37], ['(' + r[1] + ')', 130]])}'></lesson-cell>${[...r[2]].map(k => `<lesson-cell lines='${JSON.stringify(LESSON[k] || [])}'></lesson-cell>`).join('')}</div>`).join('')}`);

define('work-area', () => `<style>${BASE}
  :host{flex:1;height:1310px;padding-left:35px}
  .tools{height:55px;border-bottom:1px solid #b2b2b2;width:2150px;justify-content:flex-end;color:#546e80;font-size:20px;padding-top:5px;line-height:26px;-webkit-text-stroke:.3px #546e80}
  .form{height:48px;font-size:19px;line-height:24px;align-items:flex-start}.form fit-text{margin-top:9px}.form combo-box{margin-top:5px}
  .body{display:flex}
  </style><work-tabs></work-tabs>
  <div class="tools r"><svg width="21" height="22" viewBox="0 0 21 22" style="margin-top:4px"><path d="M6 8V1h6l3 3v4z" fill="#dfe5ea" stroke="#4d5e6b" stroke-width="1.600"/><rect y="8" width="21" height="10" rx="2.500" fill="#4d5e6b"/><rect x="4.500" y="13.500" width="12" height="7" fill="#fff" stroke="#4d5e6b" stroke-width="1.600"/></svg>
  <fit-text w="38" style="margin-top:16px">인쇄</fit-text><i style="width:1px;height:17px;background:#bbb;margin:3px 19px 0 20px"></i>
  <svg width="21" height="22" viewBox="0 0 21 22" style="margin-top:1px"><path d="M1 0h19q1 0 1 1v15h-4v6l-5-6H0V1z" fill="#5a6b7b"/><path d="M5 8h2M10 8h2M15 8h2" stroke="#fff" stroke-width="2.400"/></svg><fit-text w="58" style="margin-top:17px">도움말</fit-text></div>
  <div class="form r"><fit-text w="42" style="margin-left:9px">학기:</fit-text><combo-box style="margin-left:32px" width="99" height="27" pad="15" w="42" label="1학기"></combo-box>
  <fit-text w="69" style="margin-left:9px">수업주 :</fit-text><combo-box style="margin-left:6px" width="152" height="29" pad="52" w="21" label="02"></combo-box>
  <fit-text w="747" style="margin-left:9px;color:#dc0010;font-size:20px">시간표는 매 학기 총 16주(체육대회, 축제 등으로 17주로 구성) 시간표로 되어있습니다.</fit-text></div>
  <div class="body"><time-table></time-table><scroll-bar style="margin-left:2px;height:1148px" size="25" inset="2" len="1043"></scroll-bar></div>`);

/* ---------- Taskbar ---------- */
const APP = {
  win: [35, 35, '<defs><linearGradient id="w" x2="1" y2="1"><stop stop-color="#4ccdfd"/><stop offset="1" stop-color="#0070cf"/></linearGradient></defs><path d="M2 0h15v17H0V2q0-2 2-2zM18 0h15q2 0 2 2v15H18zM0 18h17v17H2q-2 0-2-2zM18 18h17v15q0 2-2 2H18z" fill="url(#w)"/>'],
  view: [36, 35, '<rect x="0" y="9" width="27" height="26" rx="1.500" fill="#2b2b2b"/><path d="M0 33h27" stroke="#000" stroke-width="2"/><rect x="9" y="0" width="27" height="25" rx="1.500" fill="#fbfbfc" opacity=".93"/><rect x="9" y="9" width="18" height="16" fill="#b8b8ba"/>'],
  chat: [34, 35, '<defs><linearGradient id="c" x1="0" y1=".3" x2="1" y2=".1"><stop stop-color="#8560a8"/><stop offset="1" stop-color="#7996ee"/></linearGradient><linearGradient id="c2" x2="0" y2="1"><stop offset=".4" stop-color="#5559c9" stop-opacity="0"/><stop offset=".85" stop-color="#5553c8"/></linearGradient></defs><path d="M17 0a17 17 0 1 1-8 32L1 34l2-7A17 17 0 0 1 17 0z" fill="url(#c)"/><path d="M17 0a17 17 0 1 1-8 32L1 34l2-7A17 17 0 0 1 17 0z" fill="url(#c2)"/><rect x="8" y="10" width="13" height="14" rx="1.500" fill="#fff"/><path d="M22.500 15l4-3.500v11l-4-3.500z" fill="#fff"/>'],
  folder: [36, 33, '<path d="M0 2q0-2 2-2h10l3 3h20v8H0z" fill="#e0a30c"/><defs><linearGradient id="y" x2=".7" y2="1"><stop stop-color="#ffdc70"/><stop offset="1" stop-color="#fdbb14"/></linearGradient></defs><path d="M0 6h12l4-2h20v28H0z" fill="url(#y)"/><path d="M6 32v-6q0-3 3-3h18q3 0 3 3v6z" fill="#0a6fc1"/><path d="M11 28h14" stroke="#0d4f92" stroke-width="2"/>'],
  edge: [36, 36, '<defs><linearGradient id="e" x1="0" y1=".3" x2="1" y2=".5"><stop stop-color="#2cb1f0"/><stop offset=".5" stop-color="#2ac3ce"/><stop offset="1" stop-color="#66dd3f"/></linearGradient><linearGradient id="e2" x2=".4" y2="1"><stop stop-color="#2ba0e8"/><stop offset=".5" stop-color="#0d78d4"/><stop offset="1" stop-color="#0e5cb3"/></linearGradient></defs><path d="M0 16C2 6 9 0 18 0c11 0 18 8 18 15 0 6-4 9-9 9-4 0-6-2-5-4 2-3 0-8-6-9C9 10 3 12 0 16z" fill="url(#e)"/><path d="M0 17c3-7 10-9 15-7 3 1 6 4 6 6-3-2-6 1-6 5 0 6 5 10 17 7-4 6-9 8-14 8C8 36 0 28 0 17z" fill="url(#e2)"/><path d="M17 15c-5 2-8 6-7 11 1 6 6 10 11 10 5-1 9-4 12-9-9 4-17 1-18-5-.500-3 0-5 2-7z" fill="#114f96"/>'],
  store: [35, 35, '<path d="M9 6V1h17v5" fill="none" stroke="#1fc0f2" stroke-width="2"/><defs><linearGradient id="s" x2=".3" y2="1"><stop stop-color="#0767b7"/><stop offset="1" stop-color="#243a63"/></linearGradient></defs><path d="M0 5h35v27q0 3-3 3H3q-3 0-3-3z" fill="url(#s)"/><path d="M10 12h7v7h-7z" fill="#f25022"/><path d="M18 12h7v7h-7z" fill="#7fba00"/><path d="M10 20h7v7h-7z" fill="#00a4ef"/><path d="M18 20h7v7h-7z" fill="#ffb900"/>'],
  paint: [35, 35, '<defs><linearGradient id="pa" x2=".5" y2="1"><stop stop-color="#4cd6f8"/><stop offset="1" stop-color="#0c7dd0"/></linearGradient></defs><path d="M21 0c8 0 14 6 13 15-1 8-7 9-9 12-2 4-4 7-9 7-7 0-1-9-5-10-4 0-10 3-11-3C-1 10 9 0 21 0z" fill="url(#pa)"/><circle cx="6" cy="18" r="3.300" fill="#da4a1c"/><circle cx="10" cy="10" r="3.300" fill="#2f9b0e"/><circle cx="18" cy="7" r="3.300" fill="#fdb813"/><circle cx="19" cy="19" r="2" fill="#d8f1fb"/><path d="M23 9h9l-2 6h-5z" fill="#f0c79c"/><path d="M26 15h3l-.500 20h-2z" fill="#9c5914"/>'],
  eclipse: [36, 34, '<circle cx="16" cy="17" r="16" fill="#f5952a"/><circle cx="20" cy="17" r="16" fill="#2c2255"/><path d="M9 24h22a13 9 0 0 1-22 0z" fill="#483a8c"/><path d="M4 12.500h32M4 17h32M4 21.500h32" stroke="#fff" stroke-width="1.800"/>'],
  calc: [28, 36, '<rect width="28" height="36" rx="2" fill="#6f7882"/><rect x="3" y="3" width="22" height="6" fill="#40d8fb"/><g fill="#d3d7df"><rect x="3" y="11.500" width="6" height="5.500" rx="1"/><rect x="11" y="11.500" width="6" height="5.500" rx="1"/><rect x="19" y="11.500" width="6" height="5.500" rx="1"/><rect x="3" y="19" width="6" height="6" rx="1"/><rect x="11" y="19" width="6" height="6" rx="1"/><rect x="3" y="27" width="6" height="6" rx="1"/><rect x="11" y="27" width="6" height="6" rx="1"/></g><rect x="19" y="19" width="6" height="14" rx="1" fill="#0c4a8c"/>'],
  code: [36, 36, '<path d="M26 0v9L4 28q-1 .5-2 0L0 26v-2z" fill="#0b6cb2"/><path d="M26 36v-9L4 9Q3 8.500 2 9L0 11v2z" fill="#1583cc"/><path d="M26 0l9 4 1 2v24l-1 2-9 4-2-1 3-3V4l-3-3z" fill="#27a1ee"/>'],
  term: [34, 29, '<rect x=".5" y=".5" width="33" height="28" fill="#0b0b0b" stroke="#a9adb3" stroke-width="1.500"/><rect x="1" y="1" width="32" height="3" fill="#c5c9ce"/><path d="M24 2.500h7" stroke="#445" stroke-width="1.400" stroke-dasharray="1.500 1"/><path d="M2 5h30v5Q14 12 2 20z" fill="#454545"/><path d="M7 8H4v4h3M9 9v.5M9 11v1M11 7.500l3 5M16 12.500h5" stroke="#eee" stroke-width="1.200" fill="none"/>'],
  git: [34, 34, '<circle cx="17" cy="17" r="17" fill="#7d33a0"/><circle cx="17" cy="17" r="12.500" fill="#f3ecf6"/><path d="M12.500 30v-5c-3 .5-4.500-1-5-3 2 1 3 2 5 1l.8-1.500C10 21 8.500 18 9.500 14l.1-4.500 3.800 1.700h7.200l3.800-1.700.1 4.500c1 4-.5 7-3.800 7.500l.8 2v6.500z" fill="#7d33a0"/>']
};
define('app-icon', el => {
  const [w, h, s] = APP[A(el, 'name')], cw = +A(el, 'cell', '66');
  return `<style>${BASE}:host{flex:none;width:${cw}px;height:72px;display:flex;flex-direction:column;align-items:center}.i{height:36px;margin-top:19px;display:flex;align-items:center}
  .d{width:9px;height:5px;border-radius:3px;background:#738587;margin-top:6px}</style><div class="i"><svg width="${w}" height="${h}" viewBox="0 0 ${w} ${h}">${s}</svg></div>${el.hasAttribute('run') ? '<div class="d"></div>' : ''}`;
});
define('task-bar', () => `<style>${BASE}
  :host{height:72px;background:linear-gradient(90deg,#c8e9ef,#d3edf3 18%,#cfecf2 30%,#c8eaf1 42%,#d3edf2 54%,#c9eaf1 65%,#c6e9ef 76%,#cdecf3 84%,#c9ebf3);color:#16191a}
  .bar{display:flex;height:72px;background:linear-gradient(#bcdce2,#bcdce2) no-repeat 0 0/2043px 2px}
  .sun{width:30px;height:30px;border-radius:50%;background:linear-gradient(145deg,#f0c232,#ef9020 50%,#f0640c 75%);margin:22px 0 0 33px}
  .w{margin:14px 0 0 14px;width:60px;display:flex;flex-direction:column;align-items:flex-start;line-height:23px;font-size:18px}
  .search{width:146px;height:44px;border-radius:22px;background:#f1f9fc;margin:15px 0 0 23px;box-shadow:0 1px 2px #a9ccd4;padding-left:42px;font-size:18px}
  .apps{display:flex;margin-left:5.500px}
  .chrome{width:56px;height:57px;border-radius:6px;background:#e9f5fa;margin:9px 5px 0 5.500px;box-shadow:0 1px 2px #b3d3da;display:grid;justify-items:center}
  .tray{display:flex;align-items:center;height:72px}.c{width:94px;display:flex;flex-direction:column;align-items:flex-end;line-height:24px;font-size:18px;margin-left:22px}
  .n{width:24px;height:24px;border-radius:50%;background:#c30052;color:#fff;font-size:16px;line-height:24px;text-align:center;margin-left:17px}
  </style><div class="bar"><div class="sun"></div><div class="w"><fit-text w="36">15°C</fit-text><fit-text w="34" style="color:#5a6c70">맑음</fit-text></div>
  <svg style="margin:20px 0 0 651px" width="35" height="35" viewBox="0 0 35 35">${APP.win[2]}</svg>
  <div class="search r"><svg width="21" height="21" viewBox="0 0 21 21"><circle cx="12.500" cy="8.500" r="7.300" fill="none" stroke="#111" stroke-width="2"/><path d="M7.500 13.500L1 20" stroke="#111" stroke-width="2.200"/></svg><fit-text w="34" style="margin-left:8px">검색</fit-text></div>
  <div class="apps"><app-icon name="view"></app-icon><app-icon name="chat"></app-icon><app-icon name="folder" run></app-icon><app-icon name="edge"></app-icon><app-icon name="store"></app-icon><app-icon name="paint"></app-icon><app-icon name="eclipse"></app-icon><app-icon name="calc"></app-icon></div>
  <div class="chrome"><svg width="56" height="57" viewBox="1531 1537 56 57"><circle cx="1559" cy="1565" r="18" fill="#2da94f"/><path d="M1543.400 1556A18 18 0 0 1 1574.600 1556H1559L1551 1570z" fill="#e33b2e"/><path d="M1574.600 1556A18 18 0 0 1 1559 1583L1567 1569V1556z" fill="#fcc21b"/><circle cx="1559" cy="1565" r="9" fill="#fff"/><circle cx="1559" cy="1565" r="7.200" fill="#2f7bee"/><g transform="translate(1561 1540)">${COIN}</g><rect x="1547" y="1589" width="24" height="5" rx="2.500" fill="#c30052"/></svg></div>
  <div class="apps" style="margin:0"><app-icon name="code" run></app-icon><app-icon name="term" run></app-icon><app-icon name="git" run></app-icon></div>
  <div class="tray"><svg style="margin-left:261px" width="19" height="12" viewBox="0 0 19 12"><path d="M1 11l8.500-9 8.500 9" fill="none" stroke="#16191a" stroke-width="1.700"/></svg>
  <svg style="margin-left:14px" width="25" height="19" viewBox="0 0 25 19"><path d="M6 18a5 5 0 0 1-.5-10.500A7 7 0 0 1 18 6a6 6 0 0 1 1 12z" fill="#8c8c8c" stroke="#111" stroke-width="1.500"/><path d="M2 13L12 8l12 5q-1 4.500-5 4.500H6q-3.500 0-4-4.500z" fill="#e4e4e4"/></svg>
  <svg style="margin-left:11px" width="24" height="24" viewBox="0 0 24 24"><rect width="24" height="24" rx="1.500" fill="#c24e06"/><rect x="1" y="1" width="22" height="22" fill="#e8721a"/><path d="M14 3c1 3-5 4-3 8M15 7c-3 1-3 3-1 5M7 14h9M8 17h8M5 20.500h13M17 13c4-1 3 3 0 3" stroke="#fff" stroke-width="1.700" fill="none"/></svg>
  <svg style="margin-left:18px" width="23" height="23" viewBox="0 0 23 23"><circle cx="11.500" cy="11.500" r="11.500" fill="#151a1c"/><path d="M7 7l9 9M16 7l-9 9" stroke="#fff" stroke-width="2.600"/></svg>
  <fit-text style="margin-left:34px;font-size:24px;line-height:30px" w="24">한</fit-text>
  <svg style="margin-left:33px" width="24" height="20" viewBox="0 0 24 20"><g fill="none" stroke="#16191a" stroke-width="1.700"><path d="M1 8a15 15 0 0 1 22 0M4.500 11.500a10.500 10.500 0 0 1 15 0M8 15a5.600 5.600 0 0 1 8 0"/></g><circle cx="12" cy="17.500" r="2" fill="#16191a"/></svg>
  <svg style="margin-left:12px" width="24" height="20" viewBox="0 0 24 20"><path d="M1 6.500h4l5-5v17l-5-5H1zM14.500 6l8 8M22.500 6l-8 8" fill="none" stroke="#16191a" stroke-width="1.700"/></svg>
  <svg style="margin-left:12px" width="25" height="18" viewBox="0 0 25 18"><rect x="1" y="1.500" width="19" height="15" rx="3" fill="none" stroke="#16191a" stroke-width="2"/><rect x="3.500" y="4" width="5.500" height="10" fill="#16191a"/><path d="M20 6h2q2 0 2 3t-2 3h-2z" fill="#16191a"/></svg>
  <div class="c"><fit-text w="76">오후 2:44</fit-text><fit-text w="94">2023-03-02</fit-text></div><div class="n">3</div></div></div>`);

define('app-desktop', () => `<style>${BASE}
  .main{display:flex}.page{width:2536px}.work{display:flex}.hs{display:flex}.corner{width:24px;height:24px;background:#dadada}
  </style><browser-tabs></browser-tabs><browser-toolbar></browser-toolbar>
  <div class="main"><div class="page"><site-header></site-header><div class="work"><side-menu></side-menu><menu-splitter></menu-splitter><work-area></work-area></div></div><scroll-bar style="height:1397px" size="24" len="1265"></scroll-bar></div>
  <div class="hs"><scroll-bar dir="h" size="24" len="2243" style="width:2536px"></scroll-bar><div class="corner"></div></div><task-bar></task-bar>`);
</script>
</body>
</html>
